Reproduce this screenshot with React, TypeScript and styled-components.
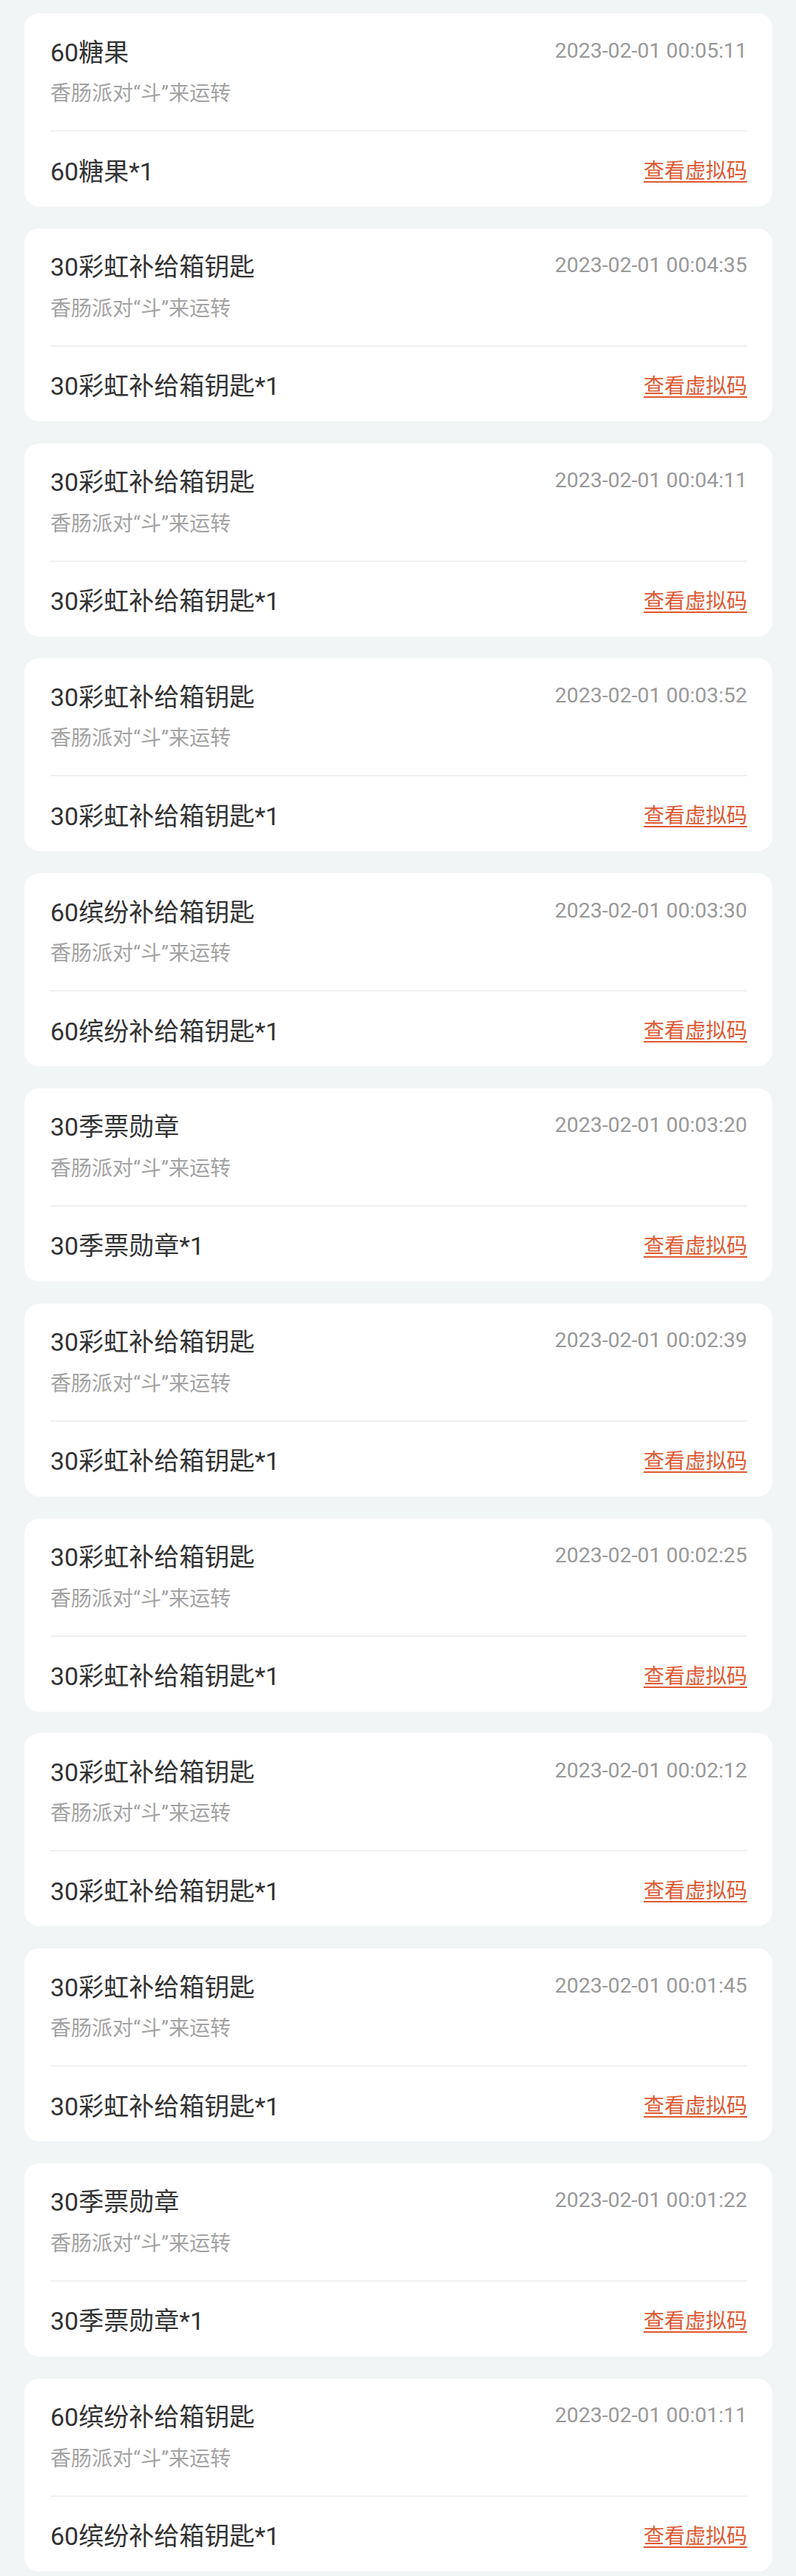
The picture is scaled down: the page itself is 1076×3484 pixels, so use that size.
import styled, { createGlobalStyle } from "styled-components";

const GlobalStyle = createGlobalStyle`
    body {
        margin: 0;
        background: #f2f5f6;
        font-family: Roboto, "Noto Sans CJK SC", sans-serif;
    }
`

const List = styled.div`
    display: flex;
    flex-direction: column;
    gap: 29.8px;
    padding: 18px 32px 8px 33px;
`

const Card = styled.div`
    height: 261px;
    box-sizing: border-box;
    background: #fff;
    border-radius: 20px;
    padding: 24px 34px 0 35px;
`

const Head = styled.div`
    display: flex;
    justify-content: space-between;
    align-items: center;
    height: 52px;
`

const Title = styled.div`
    font-size: 34px;
    color: #333;
`

const Time = styled.div`
    font-size: 28.4px;
    color: #999;
`

const Sub = styled.div`
    font-size: 28px;
    line-height: 36px;
    color: #a3a3a3;
    margin-top: 15px;
`

const Divider = styled.div`
    height: 2px;
    background: #f0f0f0;
    margin-top: 31px;
`

const Foot = styled.div`
    display: flex;
    justify-content: space-between;
    align-items: center;
    height: 52px;
    margin-top: 25px;
`

const Link = styled.a`
    font-size: 28px;
    color: #dd5a33;
    text-decoration: underline;
    text-underline-offset: 4px;
    text-decoration-thickness: 2px;
`

const records = [
    ["60糖果", "00:05:11"],
    ["30彩虹补给箱钥匙", "00:04:35"],
    ["30彩虹补给箱钥匙", "00:04:11"],
    ["30彩虹补给箱钥匙", "00:03:52"],
    ["60缤纷补给箱钥匙", "00:03:30"],
    ["30季票勋章", "00:03:20"],
    ["30彩虹补给箱钥匙", "00:02:39"],
    ["30彩虹补给箱钥匙", "00:02:25"],
    ["30彩虹补给箱钥匙", "00:02:12"],
    ["30彩虹补给箱钥匙", "00:01:45"],
    ["30季票勋章", "00:01:22"],
    ["60缤纷补给箱钥匙", "00:01:11"],
]

export default function App() {
    return (<>
        <GlobalStyle />
        <List>
            {records.map(([name, time], i) =>
                <Card key={i}>
                    <Head>
                        <Title>{name}</Title>
                        <Time>2023-02-01 {time}</Time>
                    </Head>
                    <Sub>香肠派对“斗”来运转</Sub>
                    <Divider />
                    <Foot>
                        <Title>{name}*1</Title>
                        <Link>查看虚拟码</Link>
                    </Foot>
                </Card>
            )}
        </List>
    </>)
}
